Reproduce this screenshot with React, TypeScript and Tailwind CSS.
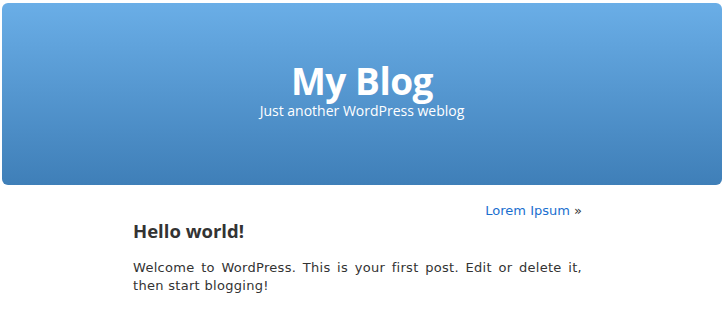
export default function App() {
  return (
    <div className="min-h-[318px] bg-white font-['DejaVu_Sans',sans-serif] text-[#333]">
      {/* Header */}
      <div className="pt-[3px] pl-[2px] pr-[4px]">
        <div className="flex h-[182px] flex-col items-center justify-center rounded-[6px] bg-gradient-to-b from-[#6aaee7] to-[#3f7fb8] pb-[8px] text-white">
          <h1 className="font-['Open_Sans',sans-serif] text-[37px] font-bold leading-[40px] tracking-[-0.5px]">
            My Blog
          </h1>
          <p className="mt-[2px] font-['Open_Sans',sans-serif] text-[14px] leading-[16px]">
            Just another WordPress weblog
          </p>
        </div>
      </div>

      {/* Content */}
      <div className="ml-[133px] w-[449px] pt-[18px]">
        <div className="text-right text-[13px] leading-[16px]">
          <a href="#" className="font-['DejaVu_Sans',sans-serif] text-[#1a6fcf]">
            Lorem Ipsum
          </a>
          <span className="text-[#333]"> »</span>
        </div>
        <h2 className="font-['Open_Sans',sans-serif] text-[18.5px] font-bold leading-[24px]">
          Hello world!
        </h2>
        <p className="mt-[16px] text-justify text-[13px] leading-[18px] tracking-[0.3px]">
          Welcome to WordPress. This is your first post. Edit or delete it, then start blogging!
        </p>
      </div>
    </div>
  );
}
